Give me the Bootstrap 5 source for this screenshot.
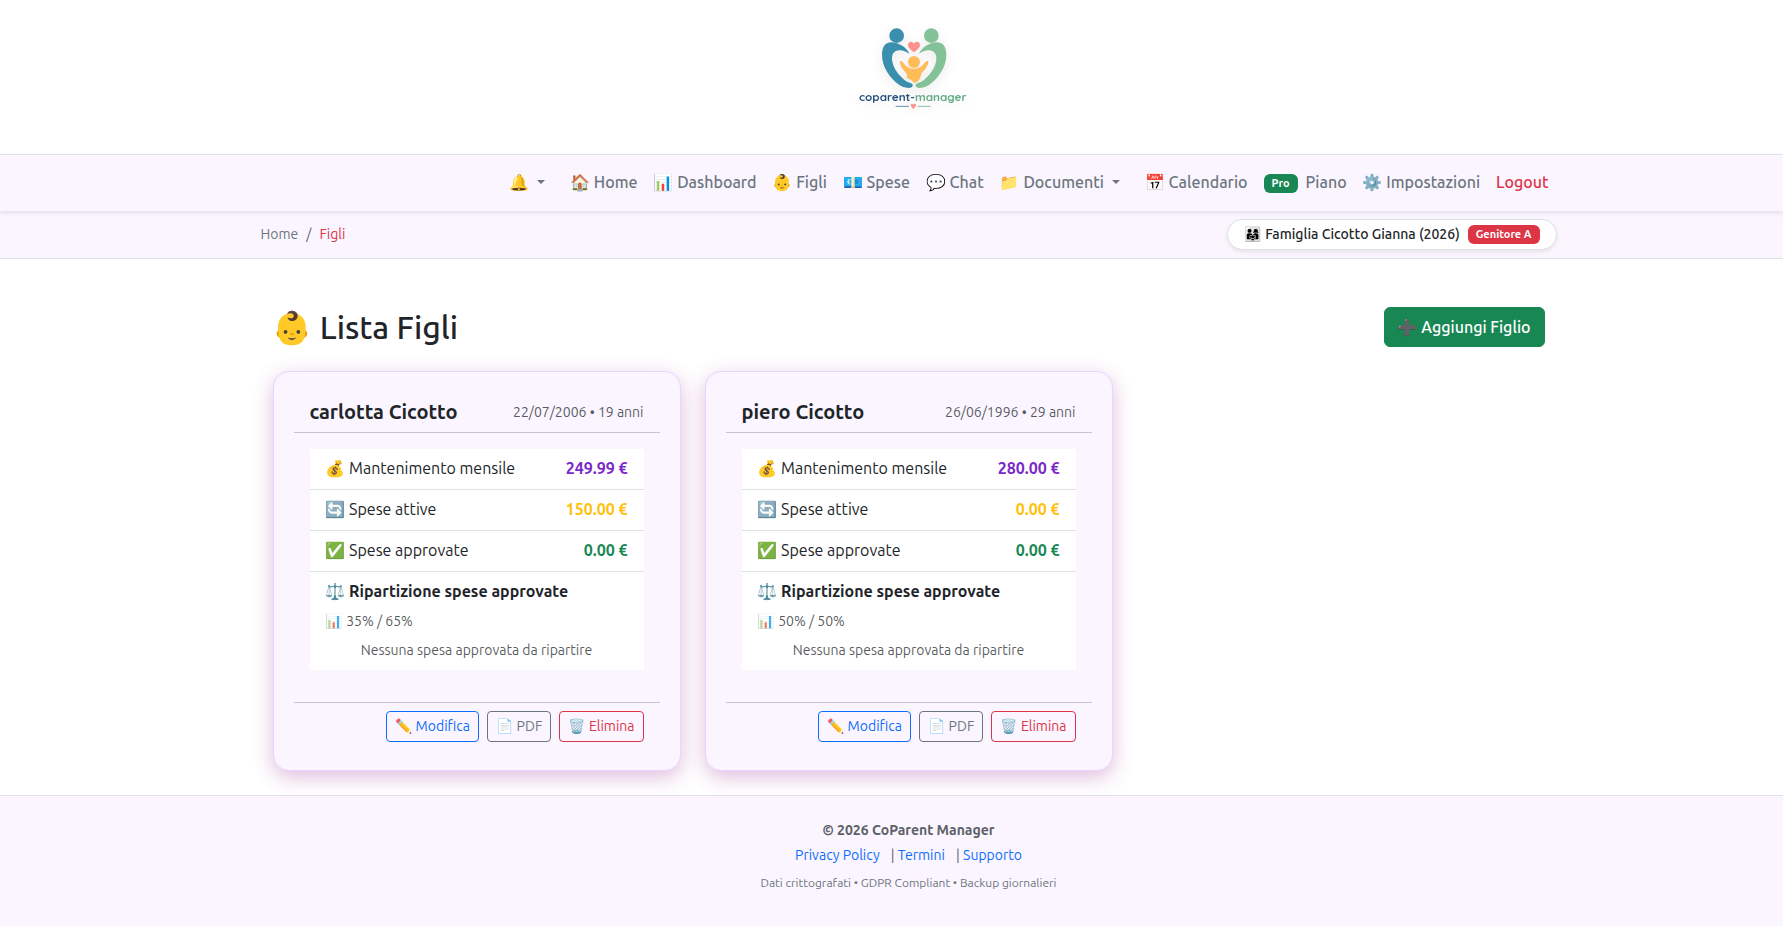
<!DOCTYPE html>
<html lang="it">
<head>
<meta charset="utf-8">
<meta name="viewport" content="width=device-width, initial-scale=1">
<title>CoParent Manager - Lista Figli</title>
<link rel="stylesheet" href="https://cdn.jsdelivr.net/npm/bootstrap@5.3.0/dist/css/bootstrap.min.css">
<style>
  :root { --lilac: #faf5ff; --lilac-border: #e9d5ff; --line: #dee2e6; }
  body { font-family: Ubuntu, "Open Sans", "Noto Color Emoji", sans-serif; font-size: 16px; line-height: 24px; background: #fff; }
  .band { padding-left: 34px; }
  .band > .container { padding-left: 12px; padding-right: 12px; }
  .text-sm { font-size: 14px; line-height: 21px; }
  .text-soft { color: rgba(33,37,41,.75); }
  .brand-band { padding-top: 10px; padding-bottom: 34px; }
  .brand-art { width: 150px; height: 110px; display: block; filter: drop-shadow(0 4px 6px rgba(0,0,0,.08)); }
  .brand-name { font-family: Quicksand, Lato, sans-serif; font-weight: 700; font-size: 35px; }
  .menu-band { position: relative; z-index: 2; background: var(--lilac); border-top: 1px solid var(--line); box-shadow: 0 2px 4px rgba(80,50,120,.12); padding-top: 7px; padding-bottom: 9px; }
  .menu-band .nav-link { color: #6c757d; padding: 8px; white-space: nowrap; line-height: 24px; font-weight: 500; }
  .menu-band .nav-link.text-danger { color: #dc3545; }
  .menu-band .dropdown { margin-right: 9px; }
  .menu-band .dropdown-toggle { background: none; border: 0; }
  .menu-band .dropdown-toggle::after { margin-left: 8px; }
  .tag { font-size: 11px; line-height: 11px; padding: 4px 8px; }
  .crumb-band { background: var(--lilac); border-bottom: 1px solid var(--line); padding-top: 8px; padding-bottom: 8px; }
  .pill { background: #fff; border: 1px solid var(--line); padding: 4px 16px; font-weight: 500; box-shadow: 0 2px 4px rgba(0,0,0,.08); }
  .page-title { font-size: 32px; line-height: 38px; font-weight: 500; }
  .main-area { padding-top: 48px; }
  .main-area .inset { padding-left: 12px; padding-right: 12px; }
  .add-btn { padding: 7px 13px; line-height: 24px; font-weight: 500; }
  .child-card { background: var(--lilac); border: 1px solid var(--lilac-border); border-radius: 16px; padding: 20px; box-shadow: 0 6px 20px rgba(160,50,150,.32); }
  .child-card .card-header, .child-card .card-footer { background: none; border-color: rgba(0,0,0,.2); padding: 8px 16px; }
  .child-card .card-body { padding: 16px 16px 32px; }
  .child-name { font-size: 20px; line-height: 24px; font-weight: 700; }
  .child-card .list-group-item { padding: 7px 16px 9px; background: #fff; border-color: var(--line); color: #212529; }
  .amount-month { color: #7b28c8; }
  .child-card .btn { padding: 4px 8px; border-radius: 4px; }
  .site-footer { background: var(--lilac); border-top: 1px solid var(--line); padding-top: 24px; padding-bottom: 34px; color: #5c6066; }
  .fine-print { font-size: 12px; line-height: 18px; color: #6c757d; }
</style>
</head>
<body>

<header class="band brand-band">
  <div class="container d-flex justify-content-center">
    <svg class="brand-art" viewBox="-19 0 450 330" role="img" aria-label="coparent-manager">
      <circle cx="169" cy="77" r="22" fill="#3a8fad"/>
      <path fill="#3a8fad" d="M150 97C133 99 125 113 125 135C125 171 149 204 174 223C187 233 206 237 215 231C219 227 218 222 212 220C204 217 196 214 189 207C168 189 155 166 155 145C155 127 166 120 182 121C191 122 199 127 207 131C204 123 195 112 183 106C171 100 161 96 150 97Z"/>
      <circle cx="273" cy="77" r="22" fill="#83c298"/>
      <path fill="#83c298" transform="translate(443 0) scale(-1 1)" d="M150 97C133 99 125 113 125 135C125 171 149 204 174 223C187 233 206 237 215 231C219 227 218 222 212 220C204 217 196 214 189 207C168 189 155 166 155 145C155 127 166 120 182 121C191 122 199 127 207 131C204 123 195 112 183 106C171 100 161 96 150 97Z"/>
      <path fill="#fc918d" d="M221 127C212 120 203 113 203 105C203 94 216 92 221 101C226 92 239 94 239 105C239 113 230 120 221 127Z"/>
      <circle cx="221" cy="156" r="18" fill="#ffbd59"/>
      <path fill="#ffbd59" d="M179 154C181 152 184 153 187 156C195 167 204 176 221 176C238 176 247 167 255 156C258 153 261 152 264 154C265 164 256 179 245 188C240 197 241 207 233 213C228 217 223 219 220 218C216 210 208 207 199 205C201 199 201 193 197 188C186 179 178 166 179 154Z"/>
      <text class="brand-name" x="56" y="272"><tspan fill="#24507c">coparent-</tspan><tspan fill="#63ab85">manager</tspan></text>
      <path d="M166 289H206" stroke="#6590a9" stroke-width="3"/>
      <path d="M232 289H271" stroke="#86bd9f" stroke-width="3"/>
      <path fill="#fc918d" d="M219 297C214 292 211 289 211 286C211 281 217 280 219 284C221 280 227 281 227 286C227 289 224 292 219 297Z"/>
    </svg>
  </div>
</header>

<nav class="band menu-band" aria-label="Menu principale">
  <div class="container">
    <ul class="nav justify-content-end">
      <li class="nav-item dropdown"><button type="button" class="nav-link dropdown-toggle" data-bs-toggle="dropdown" aria-label="Notifiche">🔔</button></li>
      <li class="nav-item"><a class="nav-link" href="#">🏠 Home</a></li>
      <li class="nav-item"><a class="nav-link" href="#">📊 Dashboard</a></li>
      <li class="nav-item"><a class="nav-link" href="#">👶 Figli</a></li>
      <li class="nav-item"><a class="nav-link" href="#">💶 Spese</a></li>
      <li class="nav-item"><a class="nav-link" href="#">💬 Chat</a></li>
      <li class="nav-item dropdown"><button type="button" class="nav-link dropdown-toggle" data-bs-toggle="dropdown">📁 Documenti</button></li>
      <li class="nav-item"><a class="nav-link" href="#">📅 Calendario</a></li>
      <li class="nav-item"><a class="nav-link" href="#"><span class="badge tag text-bg-success align-middle me-2">Pro</span>Piano</a></li>
      <li class="nav-item"><a class="nav-link" href="#">⚙️ Impostazioni</a></li>
      <li class="nav-item"><a class="nav-link text-danger" href="#">Logout</a></li>
    </ul>
  </div>
</nav>

<div class="band crumb-band text-sm">
  <div class="container d-flex justify-content-between align-items-center">
    <nav aria-label="breadcrumb">
      <ol class="breadcrumb mb-0">
        <li class="breadcrumb-item"><a class="text-secondary text-decoration-none" href="#">Home</a></li>
        <li class="breadcrumb-item active text-danger" aria-current="page">Figli</li>
      </ol>
    </nav>
    <div class="pill rounded-pill d-flex align-items-center gap-2">
      <span>👨‍👩‍👧 Famiglia Cicotto Gianna (2026)</span>
      <span class="badge tag text-bg-danger">Genitore A</span>
    </div>
  </div>
</div>

<main class="band main-area">
  <div class="container">
    <div class="inset">
      <div class="d-flex justify-content-between align-items-center mb-4">
        <h1 class="page-title mb-0">👶 Lista Figli</h1>
        <a class="btn btn-success add-btn" href="#">➕ Aggiungi Figlio</a>
      </div>
      <div class="row">
        <div class="col-md-6 col-lg-4 mb-4">
          <article class="card child-card">
            <div class="card-header d-flex justify-content-between align-items-center">
              <h2 class="child-name mb-0">carlotta Cicotto</h2>
              <span class="text-sm text-soft">22/07/2006 • 19 anni</span>
            </div>
            <div class="card-body">
              <ul class="list-group list-group-flush">
                <li class="list-group-item d-flex justify-content-between"><span>💰 Mantenimento mensile</span><strong class="amount-month">249.99 €</strong></li>
                <li class="list-group-item d-flex justify-content-between"><span>🔄 Spese attive</span><strong class="text-warning">150.00 €</strong></li>
                <li class="list-group-item d-flex justify-content-between"><span>✅ Spese approvate</span><strong class="text-success">0.00 €</strong></li>
                <li class="list-group-item">
                  <div class="mb-2">⚖️ <strong>Ripartizione spese approvate</strong></div>
                  <div class="text-sm text-soft mb-2">📊 35% / 65%</div>
                  <div class="text-sm text-soft text-center">Nessuna spesa approvata da ripartire</div>
                </li>
              </ul>
            </div>
            <div class="card-footer d-flex justify-content-end gap-2">
              <a class="btn btn-outline-primary text-sm" href="#">✏️ Modifica</a>
              <a class="btn btn-outline-secondary text-sm" href="#">📄 PDF</a>
              <button type="button" class="btn btn-outline-danger text-sm">🗑️ Elimina</button>
            </div>
          </article>
        </div>
        <div class="col-md-6 col-lg-4 mb-4">
          <article class="card child-card">
            <div class="card-header d-flex justify-content-between align-items-center">
              <h2 class="child-name mb-0">piero Cicotto</h2>
              <span class="text-sm text-soft">26/06/1996 • 29 anni</span>
            </div>
            <div class="card-body">
              <ul class="list-group list-group-flush">
                <li class="list-group-item d-flex justify-content-between"><span>💰 Mantenimento mensile</span><strong class="amount-month">280.00 €</strong></li>
                <li class="list-group-item d-flex justify-content-between"><span>🔄 Spese attive</span><strong class="text-warning">0.00 €</strong></li>
                <li class="list-group-item d-flex justify-content-between"><span>✅ Spese approvate</span><strong class="text-success">0.00 €</strong></li>
                <li class="list-group-item">
                  <div class="mb-2">⚖️ <strong>Ripartizione spese approvate</strong></div>
                  <div class="text-sm text-soft mb-2">📊 50% / 50%</div>
                  <div class="text-sm text-soft text-center">Nessuna spesa approvata da ripartire</div>
                </li>
              </ul>
            </div>
            <div class="card-footer d-flex justify-content-end gap-2">
              <a class="btn btn-outline-primary text-sm" href="#">✏️ Modifica</a>
              <a class="btn btn-outline-secondary text-sm" href="#">📄 PDF</a>
              <button type="button" class="btn btn-outline-danger text-sm">🗑️ Elimina</button>
            </div>
          </article>
        </div>
      </div>
    </div>
  </div>
</main>

<footer class="band site-footer text-center text-sm">
  <div class="container">
    <div class="fw-bold mb-1">© 2026 CoParent Manager</div>
    <div class="mb-2"><a class="text-decoration-none me-2" href="#">Privacy Policy</a> | <a class="text-decoration-none me-2" href="#">Termini</a> | <a class="text-decoration-none" href="#">Supporto</a></div>
    <div class="fine-print">Dati crittografati • GDPR Compliant • Backup giornalieri</div>
  </div>
</footer>

<script src="https://cdn.jsdelivr.net/npm/bootstrap@5.3.0/dist/js/bootstrap.bundle.min.js"></script>
</body>
</html>
